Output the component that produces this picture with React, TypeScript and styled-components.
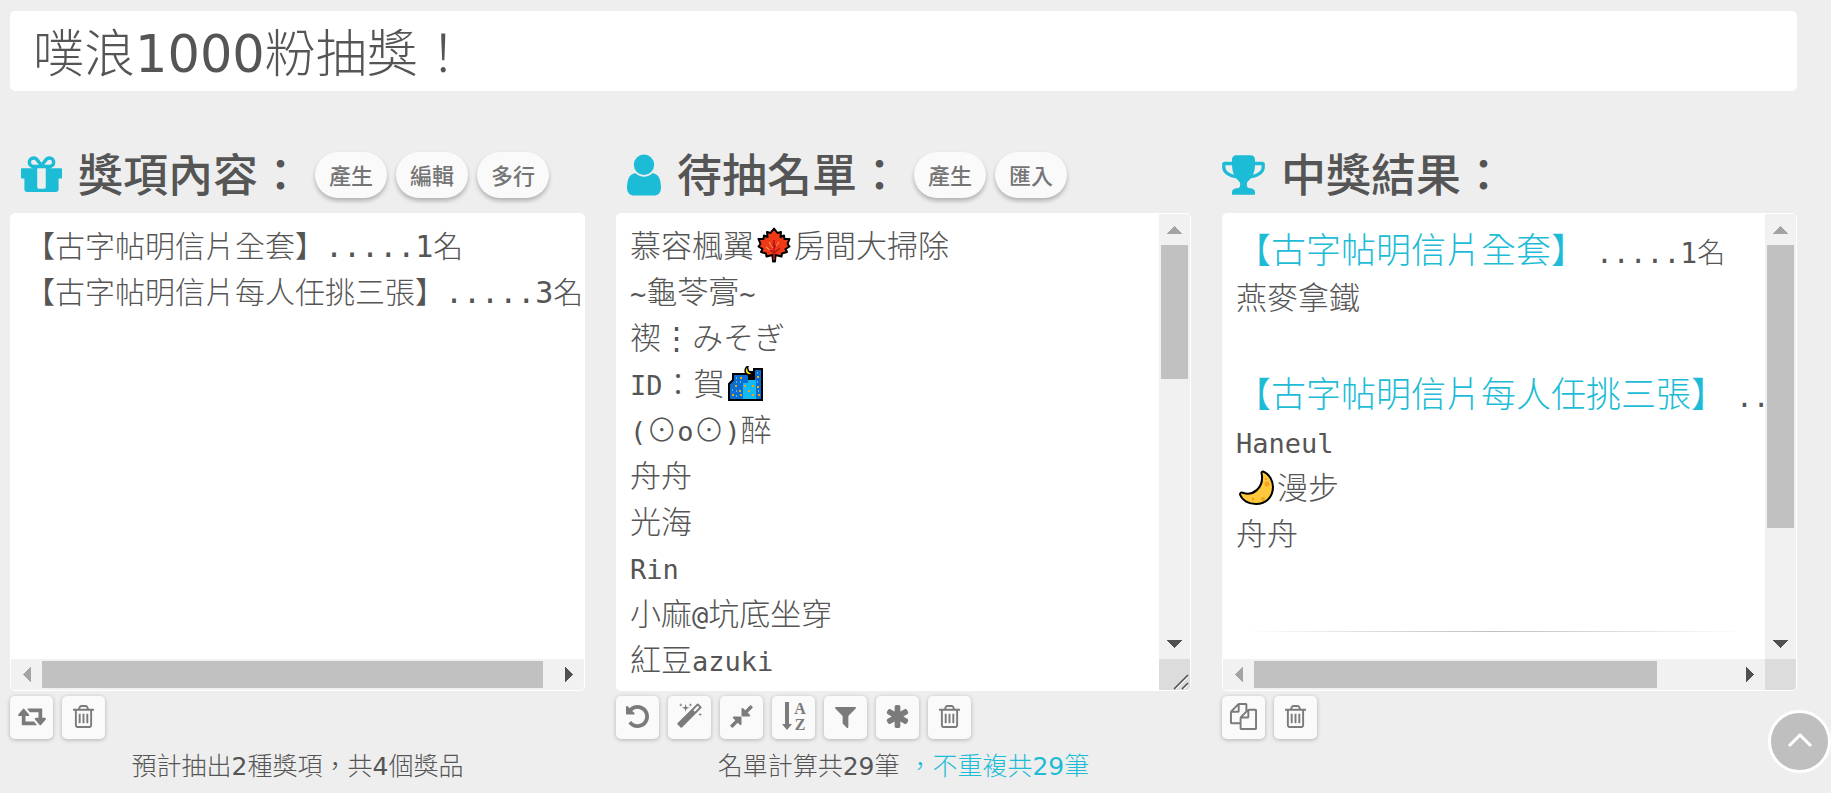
import React from "react";
import styled, { createGlobalStyle } from "styled-components";

const ACCENT = "#1dbcd6";
const INK = "#555555";
const CJK = '"Noto Sans CJK TC"';
const CJK_LIGHT = '"Noto Sans CJK TC Light", "Noto Sans CJK TC"';

const GlobalStyle = createGlobalStyle`
  *, *::before, *::after { box-sizing: border-box; }
  body {
    margin: 0;
    background: #eeeeee;
    color: ${INK};
    font-family: "DejaVu Sans", ${CJK_LIGHT}, sans-serif;
    font-weight: 400;
  }
`;

const Page = styled.main`
  padding: 11px 34px 12px 10px;
`;

const TitleInput = styled.input`
  display: block;
  width: 100%;
  height: 80px;
  padding: 0 23px 2px;
  border: 0;
  border-radius: 5px;
  background: #ffffff;
  color: ${INK};
  font: inherit;
  font-size: 51px;
  outline: none;
`;

const Columns = styled.div`
  display: grid;
  grid-template-columns: repeat(3, minmax(0, 1fr));
  gap: 31px;
  margin-top: 61px;
`;

const Column = styled.section`
  display: flex;
  flex-direction: column;
  min-width: 0;
`;

const ColumnHeader = styled.header<{ $flush?: boolean }>`
  display: flex;
  align-items: center;
  height: 46px;
  margin-bottom: 15px;
  padding-left: ${(p) => (p.$flush ? 0 : 11)}px;
`;

const ColumnTitle = styled.h2`
  display: flex;
  align-items: center;
  gap: 16px;
  margin: 0 12px 0 0;
  font-family: ${CJK}, sans-serif;
  font-size: 45px;
  font-weight: 500;
  line-height: 46px;
  white-space: nowrap;

  svg { color: ${ACCENT}; }
`;

const TitleText = styled.label`
  display: block;
  padding-bottom: 4px;
`;

const PillGroup = styled.div`
  display: flex;
  gap: 9px;
`;

const PillButton = styled.button`
  width: 72px;
  height: 46px;
  padding: 0 0 2px;
  border: 0;
  border-radius: 23px;
  background: #fafafa;
  box-shadow: 0 3px 4px rgba(0, 0, 0, 0.25);
  color: #757575;
  font-family: ${CJK}, sans-serif;
  font-size: 22px;
  font-weight: 500;
  line-height: 44px;
  cursor: pointer;
`;

const Panel = styled.div`
  display: grid;
  grid-template-columns: minmax(0, 1fr) auto;
  grid-template-rows: minmax(0, 1fr) auto;
  height: 478px;
  border: 1px solid #ffffff;
  border-radius: 5px;
  background: #ffffff;
  overflow: hidden;
`;

const PrizeArea = styled.textarea`
  display: block;
  grid-column: 1 / -1;
  width: 100%;
  height: 100%;
  margin: 0;
  padding: 10px 0 0 14px;
  border: 0;
  background: transparent;
  color: ${INK};
  font-family: "DejaVu Sans Mono", ${CJK_LIGHT}, monospace;
  font-size: 30px;
  font-weight: 400;
  line-height: 46px;
  white-space: pre;
  overflow: hidden;
  resize: none;
  outline: none;
`;

const NameEditor = styled.div`
  grid-row: 1 / -1;
  padding: 7px 0 7px 13px;
  overflow: hidden;
  outline: none;
`;

const ResultBody = styled.div`
  padding: 9px 13px 0;
  overflow: hidden;
`;

const NameLine = styled.div`
  height: 46px;
  font-family: ${CJK_LIGHT}, sans-serif;
  font-size: 31px;
  line-height: 46px;
  white-space: nowrap;

  svg {
    margin: 0 3px;
    vertical-align: -6px;
  }
`;

const Mono = styled.span`
  font-family: "DejaVu Sans Mono", monospace;
  font-size: 27px;
`;

const PrizeHeading = styled.h3`
  height: 50px;
  margin: 0;
  font-family: ${CJK_LIGHT}, sans-serif;
  font-size: 35px;
  font-weight: 400;
  line-height: 50px;
  color: ${ACCENT};
  white-space: nowrap;
`;

const PrizeCount = styled.span`
  margin-left: 10px;
  color: ${INK};
  font-family: "DejaVu Sans Mono", ${CJK_LIGHT}, monospace;
  font-size: 28px;
`;

const ResultGroup = styled.div`
  margin-bottom: 48px;
`;

const Divider = styled.hr`
  height: 1px;
  margin: 76px 6px 0;
  border: 0;
  background: linear-gradient(to right, rgba(0, 0, 0, 0), rgba(0, 0, 0, 0.25), rgba(0, 0, 0, 0));
`;

const ScrollTrack = styled.div<{ $axis: "x" | "y"; $wide?: boolean }>`
  display: flex;
  flex-direction: ${(p) => (p.$axis === "x" ? "row" : "column")};
  ${(p) => (p.$axis === "x" ? "height: 31px;" : "width: 31px;")}
  ${(p) => (p.$wide ? "grid-column: 1 / -1;" : "")}
  background: #f1f1f1;
`;

const ScrollArrow = styled.span`
  display: flex;
  flex: none;
  align-items: center;
  justify-content: center;
  width: 31px;
  height: 31px;
`;

const ScrollRail = styled.div<{ $axis: "x" | "y" }>`
  flex: 1;
  padding: ${(p) => (p.$axis === "x" ? "2px 0" : "0 2px")};
`;

const ScrollThumb = styled.div<{ $axis: "x" | "y"; $share: number }>`
  ${(p) => (p.$axis === "x" ? `width: ${p.$share}%; height: 100%;` : `height: ${p.$share}%; width: 100%;`)}
  background: #c1c1c1;
`;

const Corner = styled.div`
  grid-column: 2;
  display: flex;
  align-items: flex-end;
  justify-content: flex-end;
  width: 31px;
  height: 31px;
  background: #dcdcdc;
`;

const Toolbar = styled.div`
  display: flex;
  gap: 9px;
  margin-top: 5px;
`;

const ToolButton = styled.button`
  display: flex;
  align-items: center;
  justify-content: center;
  width: 43px;
  height: 43px;
  padding: 0 0 3px;
  border: 0;
  border-radius: 5px;
  background: #fafafa;
  box-shadow: 0 1px 4px rgba(0, 0, 0, 0.25);
  color: #7b7b7b;
  cursor: pointer;
`;

const Summary = styled.p`
  margin: 10px 0 0;
  font-size: 25px;
  line-height: 36px;
  text-align: center;
`;

const Highlight = styled.span`
  color: ${ACCENT};
`;

const TopButton = styled.button`
  position: fixed;
  right: 0;
  bottom: 20px;
  display: flex;
  align-items: center;
  justify-content: center;
  width: 63px;
  height: 63px;
  padding: 0 0 3px;
  border: 3px solid #ffffff;
  border-radius: 50%;
  background: #bfbfbf;
  color: #ffffff;
  cursor: pointer;
`;

type GlyphProps = { size: number; x?: number; w?: number; d: string };

/* Glyphs share a 1792-unit em; x and w give each one its own advance. */
const Glyph = ({ size, x = 0, w = 1792, d }: GlyphProps) => (
  <svg
    width={Math.round((size * w) / 1792)}
    height={size}
    viewBox={`${x} 0 ${w} 1792`}
    fill="currentColor"
    aria-hidden="true"
  >
    <path d={d} />
  </svg>
);

const PATHS = {
  gift: "M1056 1356v-716h-320v716q0 25 18 38.5t46 13.5h192q28 0 46-13.5t18-38.5zm-456-844h195l-126-161q-26-31-69-31-40 0-68 28t-28 68 28 68 68 28zm688-96q0-40-28-68t-68-28q-43 0-69 31l-125 161h194q40 0 68-28t28-68zm376 256v320q0 14-9 23t-23 9h-96v416q0 40-28 68t-68 28h-1088q-40 0-68-28t-28-68v-416h-96q-14 0-23-9t-9-23v-320q0-14 9-23t23-9h440q-93 0-158.5-65.5t-65.5-158.5 65.5-158.5 158.5-65.5q107 0 168 77l128 165 128-165q61-77 168-77 93 0 158.5 65.5t65.5 158.5-65.5 158.5-158.5 65.5h440q14 0 23 9t9 23z",
  user: "M1536 1399q0 109-62.5 187t-150.5 78h-854q-88 0-150.5-78t-62.5-187q0-85 8.5-160.5t31.5-152 58.5-131 94-89 134.5-34.5q131 128 313 128t313-128q76 0 134.5 34.5t94 89 58.5 131 31.5 152 8.5 160.5zm-256-887q0 159-112.5 271.5t-271.5 112.5-271.5-112.5-112.5-271.5 112.5-271.5 271.5-112.5 271.5 112.5 112.5 271.5z",
  trophy: "M522 883q-74-162-74-371h-256v96q0 78 94.5 162t235.5 113zm1078-275v-96h-256q0 209-74 371 141-29 235.5-113t94.5-162zm128-128v128q0 71-41.5 143t-112 130-173 97.5-215.5 44.5q-42 54-95 95-38 34-52.5 72.5t-14.5 89.5q0 54 30.5 91t97.5 37q75 0 133.5 45.5t58.5 114.5v64q0 14-9 23t-23 9h-832q-14 0-23-9t-9-23v-64q0-69 58.5-114.5t133.5-45.5q67 0 97.5-37t30.5-91q0-51-14.5-89.5t-52.5-72.5q-53-41-95-95-113-5-215.5-44.5t-173-97.5-112-130-41.5-143v-128q0-40 28-68t68-28h288v-96q0-66 47-113t113-47h576q66 0 113 47t47 113v96h288q40 0 68 28t28 68z",
  retweet: "M1280 1504q0 13-9.5 22.5t-22.5 9.5h-960q-8 0-13.5-2t-9-7-5.5-8-3-11.5-1-11.5v-600h-192q-26 0-45-19t-19-45q0-24 15-41l320-384q19-22 49-22t49 22l320 384q15 17 15 41 0 26-19 45t-45 19h-192v384h576q16 0 25 11l160 192q7 10 7 21zm640-416q0 24-15 41l-320 384q-20 23-49 23t-49-23l-320-384q-15-17-15-41 0-26 19-45t45-19h192v-384h-576q-16 0-25-12l-160-192q-7-9-7-20 0-13 9.5-22.5t22.5-9.5h960q8 0 13.5 2t9 7 5.5 8 3 11.5 1 11.5v600h192q26 0 45 19t19 45z",
  trash: "M704 736v576q0 14-9 23t-23 9h-64q-14 0-23-9t-9-23v-576q0-14 9-23t23-9h64q14 0 23 9t9 23zm256 0v576q0 14-9 23t-23 9h-64q-14 0-23-9t-9-23v-576q0-14 9-23t23-9h64q14 0 23 9t9 23zm256 0v576q0 14-9 23t-23 9h-64q-14 0-23-9t-9-23v-576q0-14 9-23t23-9h64q14 0 23 9t9 23zm128 724v-948h-896v948q0 22 7 40.5t14.5 27 10.5 8.5h832q3 0 10.5-8.5t14.5-27 7-40.5zm-672-1076h448l-48-117q-7-9-17-11h-317q-10 2-17 11zm928 32v64q0 14-9 23t-23 9h-96v948q0 83-47 143.5t-113 60.5h-832q-66 0-113-58.5t-47-141.5v-952h-96q-14 0-23-9t-9-23v-64q0-14 9-23t23-9h309l70-167q15-37 54-63t79-26h320q40 0 79 26t54 63l70 167h309q14 0 23 9t9 23z",
  undo: "M1664 896q0 156-61 298t-164 245-245 164-298 61q-172 0-327-72.5t-264-204.5q-7-10-6.5-22.5t8.5-20.5l137-138q10-9 25-9 16 2 23 12 73 95 179 147t225 52q104 0 198.5-40.5t163.5-109.5 109.5-163.5 40.5-198.5-40.5-198.5-109.5-163.5-163.5-109.5-198.5-40.5q-98 0-188 35.5t-160 101.5l137 138q31 30 14 69-17 40-59 40h-448q-26 0-45-19t-19-45v-448q0-42 40-59 39-17 69 14l130 129q107-101 244.5-156.5t284.5-55.5q156 0 298 61t245 164 164 245 61 298z",
  magic: "M1254 581l293-293-107-107-293 293zm447-293q0 27-18 45l-1286 1286q-18 18-45 18t-45-18l-198-198q-18-18-18-45t18-45l1286-1286q18-18 45-18t45 18l198 198q18 18 18 45zm-1351-190l98 30-98 30-30 98-30-98-98-30 98-30 30-98zm350 162l196 60-196 60-60 196-60-196-196-60 196-60 60-196zm930 478l98 30-98 30-30 98-30-98-98-30 98-30 30-98zm-640-640l98 30-98 30-30 98-30-98-98-30 98-30 30-98z",
  compress: "M896 960v448q0 26-19 45t-45 19-45-19l-144-144-332 332q-10 10-23 10t-23-10l-114-114q-10-10-10-23t10-23l332-332-144-144q-19-19-19-45t19-45 45-19h448q26 0 45 19t19 45zm755-672q0 13-10 23l-332 332 144 144q19 19 19 45t-19 45-45 19h-448q-26 0-45-19t-19-45v-448q0-26 19-45t45-19 45 19l144 144 332-332q10-10 23-10t23 10l114 114q10 10 10 23z",
  filter: "M1595 295q17 41-14 70l-493 493v742q0 42-39 59-13 5-25 5-27 0-45-19l-256-256q-19-19-19-45v-486l-493-493q-31-29-14-70 17-39 59-39h1280q42 0 59 39z",
  asterisk: "M1546 1050q46 26 59.5 77.5t-12.5 97.5l-64 110q-26 46-77.5 59.5t-97.5-12.5l-266-153v307q0 52-38 90t-90 38h-128q-52 0-90-38t-38-90v-307l-266 153q-46 26-97.5 12.5t-77.5-59.5l-64-110q-26-46-12.5-97.5t59.5-77.5l266-154-266-154q-46-26-59.5-77.5t12.5-97.5l64-110q26-46 77.5-59.5t97.5 12.5l266 153v-307q0-52 38-90t90-38h128q52 0 90 38t38 90v307l266-153q46-26 97.5-12.5t77.5 59.5l64 110q26 46 12.5 97.5t-59.5 77.5l-266 154z",
  copy: "M1696 384q40 0 68 28t28 68v1216q0 40-28 68t-68 28h-960q-40 0-68-28t-28-68v-288h-544q-40 0-68-28t-28-68v-672q0-40 20-88t48-76l408-408q28-28 76-48t88-20h416q40 0 68 28t28 68v328q68-40 128-40h416zm-544 213l-299 299h299v-299zm-640-384l-299 299h299v-299zm196 647l316-316v-416h-384v416q0 40-28 68t-68 28h-416v640h512v-256q0-40 20-88t48-76zm956 804v-1152h-384v416q0 40-28 68t-68 28h-416v640h896z",
};

const SortIcon = () => (
  <svg width="26" height="28" viewBox="0 0 26 28" fill="currentColor" aria-hidden="true">
    <path d="M4 0h4v22h3l-5 6-5-6h3z" />
    <g fontFamily="Liberation Serif, serif" fontSize="16" fontWeight="700" textAnchor="middle">
      <text x="19" y="12">A</text>
      <text x="19" y="28">Z</text>
    </g>
  </svg>
);

const MapleLeaf = () => (
  <svg width="34" height="36" viewBox="0 0 34 36" role="img" aria-label="楓葉">
    <path
      d="M17 1.500L20.500 6 24 5 23.500 10 27 8.500 27.500 12 32.500 12 30.500 17 32.500 19.500 28.500 22 30 25 25 26.500 24.500 29.500 18.500 28 18 34.500H16L15.500 28 9.500 29.500 9 26.500 4 25 5.500 22 1.500 19.500 3.500 17 1.500 12 6.500 12 7 8.500 10.500 10 10 5 13.500 6z"
      fill="#f03a17"
      stroke="#000"
      strokeWidth="2"
      strokeLinejoin="round"
    />
    <path d="M17 13v20M17 26l-6-5M17 26l6-5M17 21l-3-4M17 21l3-4" fill="none" stroke="#b5121b" strokeWidth="1.500" />
    <path d="M12 15l4 6M22 15l-3 4M9 20l4 3" stroke="#ff8a50" strokeWidth="1.200" />
  </svg>
);

const NightCity = () => (
  <svg width="35" height="35" viewBox="0 0 35 35" role="img" aria-label="夜景">
    <path d="M1 34V18l4-4V8h14V6h7V3h8v31z" fill="#0a6fd0" stroke="#000" strokeWidth="2" />
    <path d="M15 17h5v-3h8v19H15z" fill="#12b9f2" />
    <path d="M20 5h7v9h-7z" fill="#000" />
    <path d="M20 0c-4 2-4 8 1 9 2 0 3-1 4-2-4 0-6-3-5-7z" fill="#ffe100" stroke="#000" strokeWidth="1.500" />
    <path
      d="M12 11h2v2h-2zM7 19h2v2H7zM11 24h2v2h-2zM4 28h2v2H4zM12 28h2v2h-2zM16 19h2v2h-2zM24 19h2v2h-2zM20 24h2v2h-2zM24 28h2v2h-2zM30 28h2v2h-2zM29 20h2v2h-2zM29 10h2v2h-2z"
      fill="#f2a516"
    />
    <path
      d="M8 11h1v2H8zM8 15h1v2H8zM12 15h1v2h-1zM4 23h1v2H4zM8 24h1v2H8zM8 29h1v2H8zM29 6h1v2h-1zM29 15h1v2h-1zM30 24h1v2h-1z"
      fill="#5ab5f5"
    />
  </svg>
);

const CrescentMoon = () => (
  <svg width="35" height="35" viewBox="0 0 35 35" role="img" aria-label="月亮">
    <path
      d="M24 1.500C31 4 34 12 34 17 34 27 27 34 17 34 9 34 3 30 1 24.500 1 22.500 2.500 22 4.500 23 14 26 24 18 23 6 22.500 3 22 1.500 24 1.500z"
      fill="#ffc83d"
      stroke="#000"
      strokeWidth="2"
      strokeLinejoin="round"
    />
    <circle cx="28" cy="14" r="2.500" fill="#f5a31b" />
    <circle cx="27" cy="9" r="1.200" fill="#f5a31b" />
    <circle cx="14" cy="29" r="1.500" fill="#f5a31b" />
    <circle cx="24" cy="29" r="2" fill="#f5a31b" />
  </svg>
);

const ARROWS = {
  up: "0,8 15,8 7.5,0",
  down: "0,0 15,0 7.5,8",
  left: "8,0 8,15 0,7.5",
  right: "0,0 0,15 8,7.5",
};

const Arrow = ({ dir, dim }: { dir: keyof typeof ARROWS; dim?: boolean }) => {
  const upright = dir === "up" || dir === "down";
  return (
    <ScrollArrow>
      <svg width={upright ? 15 : 8} height={upright ? 8 : 15} shapeRendering="crispEdges">
        <polygon points={ARROWS[dir]} fill={dim ? "#a3a3a3" : "#505050"} />
      </svg>
    </ScrollArrow>
  );
};

const ScrollBar = ({ axis, share, wide }: { axis: "x" | "y"; share: number; wide?: boolean }) => (
  <ScrollTrack $axis={axis} $wide={wide} aria-hidden="true">
    <Arrow dir={axis === "x" ? "left" : "up"} dim />
    <ScrollRail $axis={axis}>
      <ScrollThumb $axis={axis} $share={share} />
    </ScrollRail>
    <Arrow dir={axis === "x" ? "right" : "down"} />
  </ScrollTrack>
);

const Tool = ({ label, children }: { label: string; children: React.ReactNode }) => (
  <ToolButton type="button" aria-label={label} title={label}>
    {children}
  </ToolButton>
);

const TrashTool = () => (
  <Tool label="清空">
    <Glyph size={27} x={192} w={1408} d={PATHS.trash} />
  </Tool>
);

const NAMES: React.ReactNode[] = [
  <>慕容楓翼<MapleLeaf />房間大掃除</>,
  <><Mono>~</Mono>龜苓膏<Mono>~</Mono></>,
  <>禊⋮みそぎ</>,
  <><Mono>ID</Mono>：賀<NightCity /></>,
  <><Mono>(</Mono>⊙<Mono>o</Mono>⊙<Mono>)</Mono>醉</>,
  <>舟舟</>,
  <>光海</>,
  <Mono>Rin</Mono>,
  <>小麻<Mono>@</Mono>坑底坐穿</>,
  <>紅豆<Mono>azuki</Mono></>,
];

export default function App() {
  return (
    <>
      <GlobalStyle />
      <Page lang="zh-Hant">
        <TitleInput aria-label="抽獎標題" defaultValue="噗浪1000粉抽獎！" />
        <Columns>
          <Column>
            <ColumnHeader>
              <ColumnTitle>
                <Glyph size={48} x={128} w={1536} d={PATHS.gift} />
                <TitleText htmlFor="prizes">獎項內容：</TitleText>
              </ColumnTitle>
              <PillGroup>
                <PillButton type="button">產生</PillButton>
                <PillButton type="button">編輯</PillButton>
                <PillButton type="button">多行</PillButton>
              </PillGroup>
            </ColumnHeader>
            <Panel>
              <PrizeArea
                id="prizes"
                wrap="off"
                spellCheck={false}
                defaultValue={"【古字帖明信片全套】.....1名\n【古字帖明信片每人任挑三張】.....3名"}
              />
              <ScrollBar axis="x" share={98} wide />
            </Panel>
            <Toolbar>
              <Tool label="交換"><Glyph size={26} w={1920} d={PATHS.retweet} /></Tool>
              <TrashTool />
            </Toolbar>
            <Summary>預計抽出2種獎項，共4個獎品</Summary>
          </Column>

          <Column>
            <ColumnHeader>
              <ColumnTitle id="names-title">
                <Glyph size={48} x={256} w={1280} d={PATHS.user} />
                <TitleText as="span">待抽名單：</TitleText>
              </ColumnTitle>
              <PillGroup>
                <PillButton type="button">產生</PillButton>
                <PillButton type="button">匯入</PillButton>
              </PillGroup>
            </ColumnHeader>
            <Panel>
              <NameEditor
                role="textbox"
                aria-multiline="true"
                aria-labelledby="names-title"
                contentEditable
                suppressContentEditableWarning
                spellCheck={false}
              >
                {NAMES.map((name, i) => (
                  <NameLine key={i}>{name}</NameLine>
                ))}
              </NameEditor>
              <ScrollBar axis="y" share={35} />
              <Corner>
                <svg width="18" height="18" viewBox="0 0 18 18" fill="none" aria-hidden="true">
                  <path d="M2 17L16 3M10 17l6-6" stroke="#505050" strokeWidth="1.500" />
                  <path d="M4 17L16 5M12 17l4-4" stroke="#fff" />
                </svg>
              </Corner>
            </Panel>
            <Toolbar>
              <Tool label="復原"><Glyph size={27} x={128} w={1536} d={PATHS.undo} /></Tool>
              <Tool label="整理"><Glyph size={27} w={1792} d={PATHS.magic} /></Tool>
              <Tool label="壓縮"><Glyph size={27} x={128} w={1536} d={PATHS.compress} /></Tool>
              <Tool label="排序"><SortIcon /></Tool>
              <Tool label="過濾"><Glyph size={27} x={192} w={1408} d={PATHS.filter} /></Tool>
              <Tool label="標記"><Glyph size={27} x={64} w={1664} d={PATHS.asterisk} /></Tool>
              <TrashTool />
            </Toolbar>
            <Summary>
              名單計算共29筆 <Highlight>，不重複共29筆</Highlight>
            </Summary>
          </Column>

          <Column>
            <ColumnHeader $flush>
              <ColumnTitle>
                <Glyph size={46} x={64} w={1664} d={PATHS.trophy} />
                <TitleText as="span">中獎結果：</TitleText>
              </ColumnTitle>
            </ColumnHeader>
            <Panel>
              <ResultBody>
                <ResultGroup>
                  <PrizeHeading>
                    【古字帖明信片全套】<PrizeCount>.....1名</PrizeCount>
                  </PrizeHeading>
                  <NameLine>燕麥拿鐵</NameLine>
                </ResultGroup>
                <PrizeHeading>
                  【古字帖明信片每人任挑三張】<PrizeCount>.....3名</PrizeCount>
                </PrizeHeading>
                <NameLine><Mono>Haneul</Mono></NameLine>
                <NameLine><CrescentMoon />漫步</NameLine>
                <NameLine>舟舟</NameLine>
                <Divider />
              </ResultBody>
              <ScrollBar axis="y" share={74} />
              <ScrollBar axis="x" share={84} />
              <Corner />
            </Panel>
            <Toolbar>
              <Tool label="複製"><Glyph size={27} d={PATHS.copy} /></Tool>
              <TrashTool />
            </Toolbar>
          </Column>
        </Columns>
        <TopButton type="button" aria-label="回到頂端">
          <svg width="26" height="16" viewBox="0 0 26 16" fill="none" stroke="currentColor" strokeWidth="3" aria-hidden="true">
            <path d="M2 14L13 3l11 11" />
          </svg>
        </TopButton>
      </Page>
    </>
  );
}
